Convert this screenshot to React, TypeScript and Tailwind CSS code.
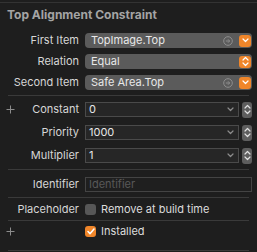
import type { ReactNode } from "react";

const font = { fontFamily: "Inter, 'Noto Sans', sans-serif" };

function Label({ children }: { children?: ReactNode }) {
  return (
    <div className="w-[79px] shrink-0 text-right text-[11px] leading-[15px] text-[#d6d6d6]">
      {children}
    </div>
  );
}

function Plus() {
  return (
    <svg width="9" height="9" viewBox="0 0 9 9" className="absolute left-[6px] top-[3px]">
      <path d="M4.5 0.5v8M0.5 4.5h8" stroke="#8c8c8c" strokeWidth="1" />
    </svg>
  );
}

function ChevronDown({ color = "#fff" }: { color?: string }) {
  return (
    <svg width="7" height="5" viewBox="0 0 7 5">
      <path d="M1 1l2.5 2.5L6 1" fill="none" stroke={color} strokeWidth="1.2" strokeLinecap="round" strokeLinejoin="round" />
    </svg>
  );
}

function UpDown({ color = "#fff" }: { color?: string }) {
  return (
    <svg width="7" height="11" viewBox="0 0 7 11">
      <path d="M1 4l2.5-2.5L6 4M1 7l2.5 2.5L6 7" fill="none" stroke={color} strokeWidth="1.2" strokeLinecap="round" strokeLinejoin="round" />
    </svg>
  );
}

function ArrowCircle() {
  return (
    <svg width="10" height="10" viewBox="0 0 10 10">
      <circle cx="5" cy="5" r="4.3" fill="none" stroke="#8e8e8e" strokeWidth="1" />
      <path d="M2.8 5h3.6M5 3.3L6.7 5 5 6.7" fill="none" stroke="#8e8e8e" strokeWidth="1" />
    </svg>
  );
}

function Popup({ value, arrow, both }: { value: string; arrow?: boolean; both?: boolean }) {
  return (
    <div className="flex h-[15px] w-[167px] items-center rounded-[4px] bg-[#5b5b5b] pl-[6px] pr-[1px]">
      <span className="flex-1 text-[11px] leading-[15px] text-[#e8e8e8]">{value}</span>
      {arrow && (
        <span className="mr-[6px] flex items-center">
          <ArrowCircle />
        </span>
      )}
      <span className="flex h-[12px] w-[12px] items-center justify-center rounded-[3px] bg-[#f0862a]">
        {both ? <UpDown /> : <ChevronDown />}
      </span>
    </div>
  );
}

function Combo({ value }: { value: string }) {
  return (
    <div className="flex items-center gap-[3px]">
      <div className="flex h-[15px] w-[154px] items-center border border-[#4a4a4a] bg-[#262626] pl-[3px] pr-[4px]">
        <span className="flex-1 text-[11px] leading-[13px] text-[#e6e6e6]">{value}</span>
        <ChevronDown color="#8c8c8c" />
      </div>
      <div className="flex h-[16px] w-[10px] items-center justify-center rounded-[3px] bg-[#5e5e5e]">
        <UpDown color="#e0e0e0" />
      </div>
    </div>
  );
}

function Row({ label, plus, children }: { label?: string; plus?: boolean; children: ReactNode }) {
  return (
    <div className="relative flex h-[15px] items-center gap-[6px]">
      {plus && <Plus />}
      <Label>{label}</Label>
      {children}
    </div>
  );
}

function Separator() {
  return <div className="mx-[8px] h-px bg-[#3a3a3a]" />;
}

export default function App() {
  return (
    <div className="h-[252px] w-[257px] overflow-hidden bg-[#1e1e1e]" style={font}>
      <div className="mt-[2px] h-px bg-[#333333]" />
      <div className="flex h-[24px] items-center pl-[7px] text-[12px] font-bold text-[#a4a4a4]">
        Top Alignment Constraint
      </div>

      <div className="flex flex-col gap-[6px] pb-[5px] pt-[6px]">
        <Row label="First Item">
          <Popup value="TopImage.Top" arrow />
        </Row>
        <Row label="Relation">
          <Popup value="Equal" both />
        </Row>
        <Row label="Second Item">
          <Popup value="Safe Area.Top" arrow />
        </Row>
      </div>
      <Separator />

      <div className="flex flex-col gap-[8px] pb-[6px] pt-[6px]">
        <Row label="Constant" plus>
          <Combo value="0" />
        </Row>
        <Row label="Priority">
          <Combo value="1000" />
        </Row>
        <Row label="Multiplier">
          <Combo value="1" />
        </Row>
      </div>
      <Separator />

      <div className="pb-[5px] pt-[7px]">
        <Row label="Identifier">
          <div className="flex h-[15px] w-[167px] items-center border border-[#444444] bg-[#1f1f1f] pl-[3px] text-[11px] leading-[13px] text-[#585858]">
            Identifier
          </div>
        </Row>
      </div>
      <Separator />

      <div className="pb-[3px] pt-[4px]">
        <Row label="Placeholder">
          <div className="flex items-center gap-[5px]">
            <span className="h-[11px] w-[11px] rounded-[3px] bg-[#575757]" />
            <span className="text-[11px] leading-[15px] text-[#dcdcdc]">Remove at build time</span>
          </div>
        </Row>
      </div>
      <Separator />

      <div className="pb-[11px] pt-[3px]">
        <Row plus>
          <div className="flex items-center gap-[5px]">
            <span className="flex h-[11px] w-[11px] items-center justify-center rounded-[3px] bg-[#f0862a]">
              <svg width="8" height="7" viewBox="0 0 8 7">
                <path d="M1 3.6l2 2.2L7 1" fill="none" stroke="#fff" strokeWidth="1.5" strokeLinecap="round" strokeLinejoin="round" />
              </svg>
            </span>
            <span className="text-[11px] leading-[15px] text-[#dcdcdc]">Installed</span>
          </div>
        </Row>
      </div>
      <Separator />
    </div>
  );
}
